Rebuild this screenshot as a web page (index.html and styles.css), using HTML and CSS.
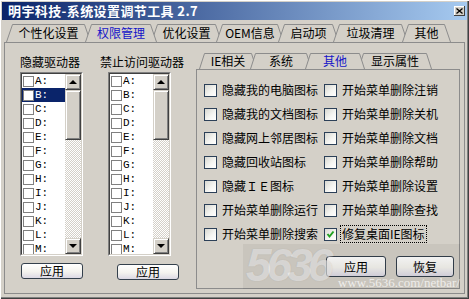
FILE: index.html
```html
<!DOCTYPE html>
<html lang="zh-CN">
<head>
<meta charset="utf-8">
<title>明宇科技-系统设置调节工具 2.7</title>
<link rel="stylesheet" href="styles.css">
</head>
<body>
<div class="window">
  <div class="titlebar">
    <span class="title">明宇科技-系统设置调节工具 2.7</span>
    <span class="close"><svg width="7" height="6" viewBox="0 0 7 6"><path d="M0.5 0.5 L6.5 5.5 M6.5 0.5 L0.5 5.5" stroke="#000" stroke-width="1.3" fill="none"/></svg></span>
  </div>
  <div class="body">
    <div class="tabstrip">
      <div class="tab w85"><svg width="85" height="18" viewBox="0 0 85 18"><path d="M0.5 18 L6.5 0.5 L78.5 0.5 L84.5 18"/></svg><span>个性化设置</span></div>
      <div class="tab w72 active"><svg width="72" height="18" viewBox="0 0 72 18"><path d="M0.5 18 L6.5 0.5 L65.5 0.5 L71.5 18"/></svg><span>权限管理</span></div>
      <div class="tab w71"><svg width="71" height="18" viewBox="0 0 71 18"><path d="M0.5 18 L6.5 0.5 L64.5 0.5 L70.5 18"/></svg><span>优化设置</span></div>
      <div class="tab w68"><svg width="68" height="18" viewBox="0 0 68 18"><path d="M0.5 18 L6.5 0.5 L61.5 0.5 L67.5 18"/></svg><span>OEM信息</span></div>
      <div class="tab w61"><svg width="61" height="18" viewBox="0 0 61 18"><path d="M0.5 18 L6.5 0.5 L54.5 0.5 L60.5 18"/></svg><span>启动项</span></div>
      <div class="tab w75"><svg width="75" height="18" viewBox="0 0 75 18"><path d="M0.5 18 L6.5 0.5 L68.5 0.5 L74.5 18"/></svg><span>垃圾清理</span></div>
      <div class="tab w49"><svg width="49" height="18" viewBox="0 0 49 18"><path d="M0.5 18 L6.5 0.5 L42.5 0.5 L48.5 18"/></svg><span>其他</span></div>
    </div>
    <div class="panel">
      <div class="drives">
        <div class="group g1">
          <div class="label">隐藏驱动器</div>
          <div class="listbox">
            <div class="listbox-inner">
              <div class="list">
                <div class="row"><span class="cb-small"></span><span class="letter">A:</span></div>
                <div class="row selected"><span class="cb-small"></span><span class="letter">B:</span></div>
                <div class="row"><span class="cb-small"></span><span class="letter">C:</span></div>
                <div class="row"><span class="cb-small"></span><span class="letter">D:</span></div>
                <div class="row"><span class="cb-small"></span><span class="letter">E:</span></div>
                <div class="row"><span class="cb-small"></span><span class="letter">F:</span></div>
                <div class="row"><span class="cb-small"></span><span class="letter">G:</span></div>
                <div class="row"><span class="cb-small"></span><span class="letter">H:</span></div>
                <div class="row"><span class="cb-small"></span><span class="letter">I:</span></div>
                <div class="row"><span class="cb-small"></span><span class="letter">J:</span></div>
                <div class="row"><span class="cb-small"></span><span class="letter">K:</span></div>
                <div class="row"><span class="cb-small"></span><span class="letter">L:</span></div>
                <div class="row"><span class="cb-small"></span><span class="letter">M:</span></div>
              </div>
              <div class="scrollbar">
                <div class="sb-btn"><span class="arrow-up"></span></div>
                <div class="sb-thumb"></div>
                <div class="sb-track"></div>
                <div class="sb-btn"><span class="arrow-down"></span></div>
              </div>
            </div>
          </div>
          <button class="btn-small">应用</button>
        </div>
        <div class="group g2">
          <div class="label">禁止访问驱动器</div>
          <div class="listbox">
            <div class="listbox-inner">
              <div class="list">
                <div class="row"><span class="cb-small"></span><span class="letter">A:</span></div>
                <div class="row"><span class="cb-small"></span><span class="letter">B:</span></div>
                <div class="row"><span class="cb-small"></span><span class="letter">C:</span></div>
                <div class="row"><span class="cb-small"></span><span class="letter">D:</span></div>
                <div class="row"><span class="cb-small"></span><span class="letter">E:</span></div>
                <div class="row"><span class="cb-small"></span><span class="letter">F:</span></div>
                <div class="row"><span class="cb-small"></span><span class="letter">G:</span></div>
                <div class="row"><span class="cb-small"></span><span class="letter">H:</span></div>
                <div class="row"><span class="cb-small"></span><span class="letter">I:</span></div>
                <div class="row"><span class="cb-small"></span><span class="letter">J:</span></div>
                <div class="row"><span class="cb-small"></span><span class="letter">K:</span></div>
                <div class="row"><span class="cb-small"></span><span class="letter">L:</span></div>
                <div class="row"><span class="cb-small"></span><span class="letter">M:</span></div>
              </div>
              <div class="scrollbar">
                <div class="sb-btn"><span class="arrow-up"></span></div>
                <div class="sb-thumb"></div>
                <div class="sb-track"></div>
                <div class="sb-btn"><span class="arrow-down"></span></div>
              </div>
            </div>
          </div>
          <button class="btn-small">应用</button>
        </div>
      </div>
      <div class="inner">
        <div class="tabstrip inner-tabs">
          <div class="tab itab w58"><svg width="58" height="16" viewBox="0 0 58 16"><path d="M0.5 16 L5.5 0.5 L52.5 0.5 L57.5 16"/></svg><span>IE相关</span></div>
          <div class="tab itab w62"><svg width="62" height="16" viewBox="0 0 62 16"><path d="M0.5 16 L5.5 0.5 L56.5 0.5 L61.5 16"/></svg><span>系统</span></div>
          <div class="tab itab w60 active"><svg width="60" height="16" viewBox="0 0 60 16"><path d="M0.5 16 L5.5 0.5 L54.5 0.5 L59.5 16"/></svg><span>其他</span></div>
          <div class="tab itab w74"><svg width="74" height="16" viewBox="0 0 74 16"><path d="M0.5 16 L5.5 0.5 L68.5 0.5 L73.5 16"/></svg><span>显示属性</span></div>
        </div>
        <div class="inner-panel">
          <div class="options">
            <label class="opt"><span class="cb"></span><span class="opt-text">隐藏我的电脑图标</span></label>
            <label class="opt"><span class="cb"></span><span class="opt-text">开始菜单删除注销</span></label>
            <label class="opt"><span class="cb"></span><span class="opt-text">隐藏我的文档图标</span></label>
            <label class="opt"><span class="cb"></span><span class="opt-text">开始菜单删除关机</span></label>
            <label class="opt"><span class="cb"></span><span class="opt-text">隐藏网上邻居图标</span></label>
            <label class="opt"><span class="cb"></span><span class="opt-text">开始菜单删除文档</span></label>
            <label class="opt"><span class="cb"></span><span class="opt-text">隐藏回收站图标</span></label>
            <label class="opt"><span class="cb"></span><span class="opt-text">开始菜单删除帮助</span></label>
            <label class="opt"><span class="cb"></span><span class="opt-text">隐藏ＩＥ图标</span></label>
            <label class="opt"><span class="cb"></span><span class="opt-text">开始菜单删除设置</span></label>
            <label class="opt"><span class="cb"></span><span class="opt-text">开始菜单删除运行</span></label>
            <label class="opt"><span class="cb"></span><span class="opt-text">开始菜单删除查找</span></label>
            <label class="opt"><span class="cb"></span><span class="opt-text">开始菜单删除搜索</span></label>
            <label class="opt"><span class="cb checked"><svg width="11" height="11" viewBox="0 0 11 11"><path d="M2.5 5 L4.5 7.5 L8.5 2.5" stroke="#21a121" stroke-width="2" fill="none"/></svg></span><span class="opt-text focus">修复桌面IE图标</span></label>
          </div>
          <div class="actions">
            <button class="btn w60b">应用</button>
            <button class="btn w58b">恢复</button>
          </div>
        </div>
      </div>
    </div>
  </div>
  <div class="watermark">
    <span class="wm-num">5636</span>
    <span class="wm-url">www.5636.com/netbar/</span>
  </div>
</div>
</body>
</html>
```

FILE: styles.css
```css
* { box-sizing: border-box; }
html, body { margin: 0; padding: 0; }
body {
  width: 469px;
  height: 299px;
  overflow: hidden;
  background: #d4d0c8;
  font-family: "Noto Sans CJK SC", sans-serif;
  font-size: 12px;
  color: #000;
}
.window {
  position: relative;
  width: 469px;
  height: 299px;
  padding: 2px;
  background: #d4d0c8;
  box-shadow: inset 1px 1px 0 #fff, inset -1px -1px 0 #404040, inset -2px -2px 0 #808080;
}
.titlebar {
  height: 18px;
  display: flex;
  align-items: center;
  justify-content: space-between;
  padding: 0 2px 0 6px;
  background: linear-gradient(to right, #0a246a, #a6caf0);
}
.title {
  color: #fff;
  font-weight: bold;
  font-size: 13px;
  line-height: 18px;
  letter-spacing: 0.4px;
}
.close {
  width: 11px;
  height: 10px;
  background: #d4d0c8;
  box-shadow: inset -1px -1px 0 #404040, inset 1px 1px 0 #fff;
  display: flex;
  align-items: center;
  justify-content: center;
}
.body { padding: 4px 2px 0 2px; }

.tabstrip {
  display: flex;
  height: 18px;
  padding-left: 2px;
}
.tab {
  position: relative;
  flex: none;
  height: 18px;
  display: flex;
  align-items: center;
  justify-content: center;
  margin-left: -6px;
  line-height: 1;
}
.tab:first-child { margin-left: 0; }
.tab svg { position: absolute; left: 0; top: 0; }
.tab svg path { fill: #d4d0c8; stroke: #8c8c8c; stroke-width: 1; }
.tab span { position: relative; }
.tab.active { z-index: 2; color: #1414c8; }
.w85 { width: 85px; }
.w72 { width: 72px; }
.w71 { width: 71px; }
.w68 { width: 68px; }
.w61 { width: 61px; }
.w75 { width: 75px; }
.w49 { width: 49px; }

.panel {
  height: 252px;
  border: 1px solid #8c8c8c;
  display: flex;
}
.drives {
  width: 191px;
  display: flex;
  gap: 17px;
  padding: 12px 0 0 15px;
}
.group { display: flex; flex-direction: column; align-items: flex-start; }
.label { height: 14px; line-height: 14px; white-space: nowrap; }
.listbox {
  margin-top: 3px;
  width: 63px;
  height: 184px;
  border: 1px solid;
  border-color: #808080 #fff #fff #808080;
}
.g2 .listbox { margin-left: 8px; }
.listbox-inner {
  height: 100%;
  border: 1px solid;
  border-color: #404040 #d4d0c8 #d4d0c8 #404040;
  background: #fff;
  display: flex;
}
.list { flex: 1; overflow: hidden; }
.row {
  height: 14px;
  display: flex;
  align-items: center;
  padding-left: 1px;
}
.row.selected { background: #0a246a; color: #fff; }
.cb-small {
  width: 11px;
  height: 11px;
  border: 1px solid #808080;
  background: #fff;
  margin-right: 1px;
}
.letter {
  font-family: "Liberation Mono", monospace;
  font-size: 11px;
  line-height: 14px;
}
.scrollbar { width: 16px; display: flex; flex-direction: column; }
.sb-btn, .sb-thumb {
  background: #d4d0c8;
  border: 1px solid;
  border-color: #d4d0c8 #404040 #404040 #d4d0c8;
  box-shadow: inset 1px 1px 0 #fff, inset -1px -1px 0 #808080;
}
.sb-btn {
  height: 16px;
  display: flex;
  align-items: center;
  justify-content: center;
}
.sb-thumb { height: 50px; }
.sb-track {
  flex: 1;
  background: repeating-conic-gradient(#fff 0 25%, #d4d0c8 0 50%) 0 0 / 2px 2px;
}
.arrow-up, .arrow-down { width: 0; height: 0; border-left: 4px solid transparent; border-right: 4px solid transparent; }
.arrow-up { border-bottom: 4px solid #000; }
.arrow-down { border-top: 4px solid #000; }

.btn-small, .btn {
  font-family: inherit;
  font-size: 12px;
  color: #000;
  padding: 0;
  border: 1px solid #34404c;
  border-radius: 3px;
  background: linear-gradient(#ffffff, #f4f3ee 55%, #dcd9e4);
  display: flex;
  align-items: center;
  justify-content: center;
}
.btn-small {
  width: 62px;
  height: 16px;
  margin-top: 7px;
  margin-left: 1px;
  line-height: 1;
}
.g2 .btn-small { margin-top: 8px; margin-left: 17px; }

.inner {
  width: 264px;
  padding-top: 10px;
}
.inner-tabs { height: 16px; padding-left: 3px; }
.itab { height: 16px; margin-left: -7px; }
.itab:first-child { margin-left: 0; }
.w58 { width: 58px; }
.w62 { width: 62px; }
.w60 { width: 60px; }
.w74 { width: 74px; }
.inner-panel {
  height: 220px;
  border: 1px solid #8c8c8c;
  padding: 8px 5px 0 7px;
}
.options {
  display: grid;
  grid-template-columns: 120px 120px;
  grid-auto-rows: 24px;
}
.opt {
  display: flex;
  align-items: center;
  gap: 5px;
  white-space: nowrap;
}
.opt-text { line-height: 14px; }
.cb {
  width: 13px;
  height: 13px;
  flex: none;
  border: 1px solid #2c4058;
  background: linear-gradient(135deg, #d8d8d2, #f6f6f3 60%, #fff);
  display: flex;
  align-items: center;
  justify-content: center;
}
.focus { outline: 1px dotted #000; outline-offset: 1px; }
.actions {
  display: flex;
  justify-content: flex-end;
  gap: 10px;
  margin-top: 10px;
}
.btn { height: 21px; }
.w60b { width: 60px; }
.w58b { width: 58px; }

.watermark {
  position: absolute;
  left: 243px;
  top: 244px;
  width: 217px;
  height: 45px;
  background: rgba(0, 0, 0, 0.05);
  pointer-events: none;
}
.wm-num {
  position: absolute;
  left: 3px;
  top: 4px;
  font-family: "Liberation Sans", sans-serif;
  font-weight: bold;
  font-style: italic;
  font-size: 46px;
  line-height: 34px;
  letter-spacing: -5px;
  color: rgba(255, 255, 255, 0.5);
  text-shadow: 0 0 1px rgba(120, 120, 120, 0.35);
}
.wm-url {
  position: absolute;
  right: 0;
  bottom: 0;
  line-height: 12px;
  font-family: "Liberation Serif", serif;
  font-size: 13px;
  color: rgba(255, 255, 255, 0.7);
}
```
